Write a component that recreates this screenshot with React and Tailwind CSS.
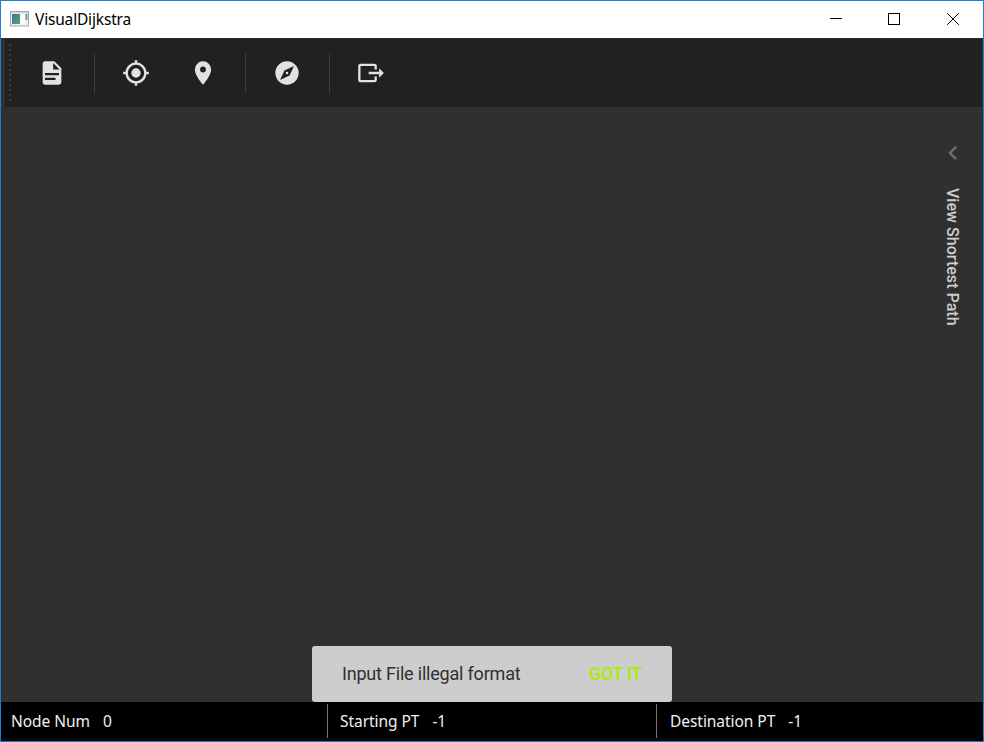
import React from "react";

const icons = {
  file: "M13,9H18.5L13,3.5V9M6,2H14L20,8V20A2,2 0 0,1 18,22H6C4.89,22 4,21.1 4,20V4C4,2.89 4.89,2 6,2M15,18V16H6V18H15M18,14V12H6V14H18Z",
  gps: "M12,8A4,4 0 0,1 16,12A4,4 0 0,1 12,16A4,4 0 0,1 8,12A4,4 0 0,1 12,8M3.05,13H1V11H3.05C3.5,6.83 6.83,3.5 11,3.05V1H13V3.05C17.17,3.5 20.5,6.83 20.95,11H23V13H20.95C20.5,17.17 17.17,20.5 13,20.95V23H11V20.95C6.83,20.5 3.5,17.17 3.05,13M12,5A7,7 0 0,0 5,12A7,7 0 0,0 12,19A7,7 0 0,0 19,12A7,7 0 0,0 12,5Z",
  marker: "M12,11.5A2.5,2.5 0 0,1 9.5,9A2.5,2.5 0 0,1 12,6.5A2.5,2.5 0 0,1 14.5,9A2.5,2.5 0 0,1 12,11.5M12,2A7,7 0 0,0 5,9C5,14.25 12,22 12,22C12,22 19,14.25 19,9A7,7 0 0,0 12,2Z",
  compass: "M14.19,14.19L6,18L9.81,9.81L18,6M12,2A10,10 0 0,0 2,12A10,10 0 0,0 12,22A10,10 0 0,0 22,12A10,10 0 0,0 12,2M12,10.9A1.1,1.1 0 0,0 10.9,12A1.1,1.1 0 0,0 12,13.1A1.1,1.1 0 0,0 13.1,12A1.1,1.1 0 0,0 12,10.9Z",
  exit: "M23,12L19,8V11H10V13H19V16M1,18V6C1,4.89 1.9,4 3,4H15A2,2 0 0,1 17,6V9H15V6H3V18H15V15H17V18A2,2 0 0,1 15,20H3A2,2 0 0,1 1,18Z",
  left: "M15.41,16.58L10.83,12L15.41,7.41L14,6L8,12L14,18L15.41,16.58Z",
};

function Icon({ name, className }) {
  return (
    <svg viewBox="0 0 24 24" className={className} fill="currentColor">
      <path d={icons[name]} />
    </svg>
  );
}

function ToolButton({ name }) {
  return (
    <button className="flex h-10 w-[67px] shrink-0 items-center justify-center pr-px text-[#e2e2e2]">
      <Icon name={name} className="size-7" />
    </button>
  );
}

function Divider() {
  return <div className="mx-2 h-10 w-px shrink-0 bg-[#3e3e3e]" />;
}

function TitleBar() {
  return (
    <header className="flex h-[37px] shrink-0 items-center bg-white pl-[9px] text-black">
      <svg width="19" height="16" viewBox="0 0 19 16" className="mb-px mr-[6px]">
        <defs>
          <linearGradient id="app" x1="0" y1="0" x2="1" y2="1">
            <stop offset="0" stopColor="#3f7399" />
            <stop offset="1" stopColor="#50a878" />
          </linearGradient>
        </defs>
        <rect x=".5" y=".5" width="18" height="14.5" fill="#f0f0f0" stroke="#a5a9a9" />
        <rect x="1" y="1" width="17" height="1.5" fill="#d6dadd" />
        <rect x="2" y="3" width="8" height="10" fill="url(#app)" />
        <rect x="11" y="3" width="4" height="10" fill="#fafafa" />
        <rect x="15.5" y="3" width="2" height="6" fill="url(#app)" opacity=".8" />
      </svg>
      <span className="pb-0.5 font-['Noto_Sans',sans-serif] text-[15.5px] leading-5 tracking-[-0.17px]">VisualDijkstra</span>
      <div className="ml-auto flex h-full items-center pb-px" shapeRendering="crispEdges">
        <button className="flex w-[58px] justify-center">
          <svg width="12" height="12"><path d="M0 5.5H12" stroke="#000" /></svg>
        </button>
        <button className="flex w-[58px] justify-center">
          <svg width="12" height="12"><rect x=".5" y=".5" width="11" height="11" fill="none" stroke="#000" /></svg>
        </button>
        <button className="flex w-[60px] justify-center">
          <svg width="12" height="12"><path d="M.2 .2L11.8 11.8M11.8 .2L.2 11.8" stroke="#000" /></svg>
        </button>
      </div>
    </header>
  );
}

function Toolbar() {
  return (
    <div className="ml-1 mr-px flex h-[69px] shrink-0 items-center border-t border-[#2b2b2b] bg-[#212121]">
      <svg width="14" height="60" className="shrink-0">
        {Array.from({ length: 12 }, (_, i) => (
          <rect key={i} x="4" y={1 + i * 5} width="2" height="2" fill="#3c3c3c" />
        ))}
      </svg>
      <ToolButton name="file" />
      <Divider />
      <ToolButton name="gps" />
      <ToolButton name="marker" />
      <Divider />
      <ToolButton name="compass" />
      <Divider />
      <ToolButton name="exit" />
    </div>
  );
}

function Status({ label, value, className }) {
  return (
    <div className={`flex h-[34px] items-center gap-[13px] ${className}`}>
      <span>{label}</span>
      <span>{value}</span>
    </div>
  );
}

export default function App() {
  return (
    <div className="flex h-[742px] w-[984px] flex-col overflow-hidden border border-[#1b7fd0] bg-[#303030]">
      <TitleBar />
      <Toolbar />
      <main className="relative flex min-h-0 grow justify-end">
        <aside className="mr-[14px] flex w-8 flex-col items-center pt-8 text-[#cdcdcd]">
          <Icon name="left" className="size-7 text-[#707070]" />
          <span className="mr-0.5 mt-[21px] font-['Roboto',sans-serif] text-[16px] font-medium leading-5 tracking-[0.04px] [writing-mode:vertical-rl]">
            View Shortest Path
          </span>
        </aside>
        <div className="absolute bottom-0 left-[311px] flex h-14 w-[360px] items-center justify-between rounded-[3px] bg-[#cdcdcd] pb-0.5 pl-[30px] pr-[30px] font-['Roboto',sans-serif] text-[18px]">
          <span className="tracking-[-0.2px] text-[#303030]">Input File illegal format</span>
          <button className="font-medium tracking-[-0.35px] text-[#aeea00]">GOT IT</button>
        </div>
      </main>
      <footer className="flex h-[39px] shrink-0 items-center bg-black pb-px font-['Noto_Sans',sans-serif] text-[15.5px] leading-5 tracking-[-0.05px] text-[#f0f0f0]">
        <Status label="Node Num" value="0" className="w-[326px] pl-[10px]" />
        <Status label="Starting PT" value="-1" className="w-[329px] border-l border-[#777] pl-3" />
        <Status label="Destination PT" value="-1" className="grow border-l border-[#777] pl-[13px]" />
      </footer>
    </div>
  );
}
